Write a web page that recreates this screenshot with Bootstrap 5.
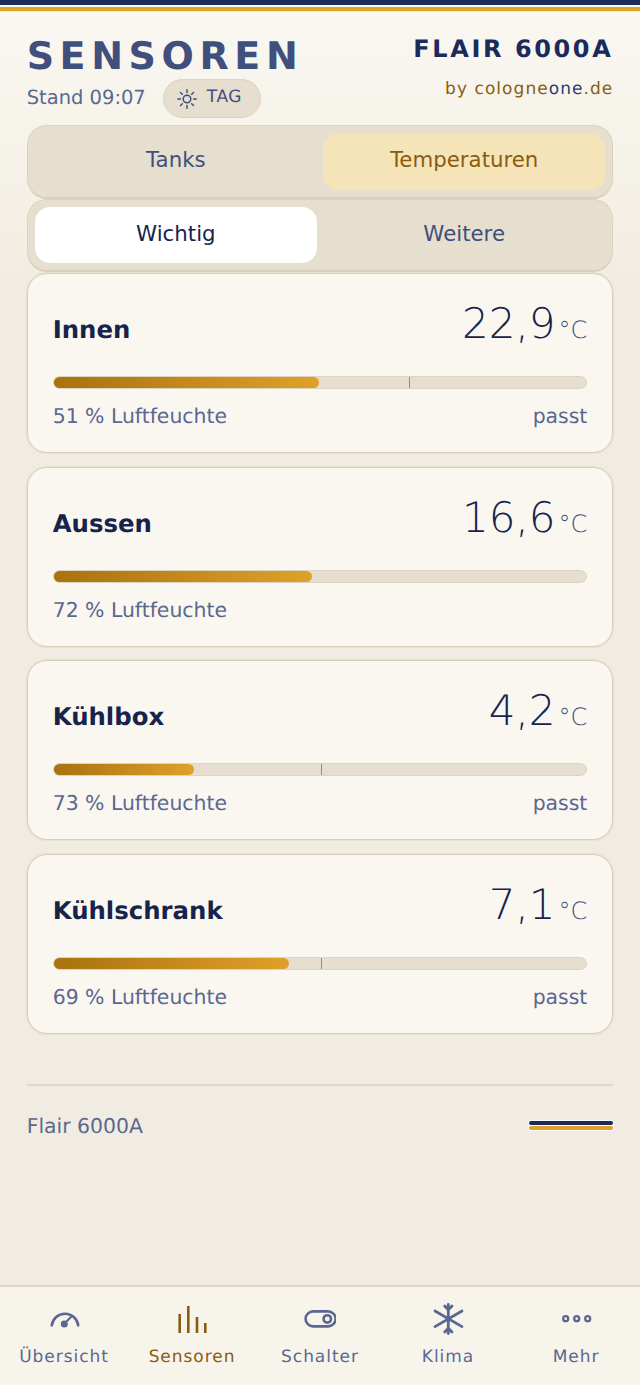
<!DOCTYPE html>
<html lang="de">
<head>
  <meta charset="UTF-8">
  <meta name="viewport" content="width=device-width, initial-scale=1.0">
  <title>Sensoren</title>
  <link href="https://cdn.jsdelivr.net/npm/bootstrap@5.3.0/dist/css/bootstrap.min.css" rel="stylesheet">
  <style>
    body {
      background: #f1ece1;
      font-family: "DejaVu Sans", sans-serif;
      color: #16244c;
      text-rendering: geometricPrecision;
    }
    .app-shell {
      height: 1385px;
      background: linear-gradient(180deg, #faf8f3 0, #f6f3ea 130px, #f1ece1 300px);
    }
    .top-stripe {
      height: 11px;
      border-top: 5px solid #1a2a5a;
      border-bottom: 4px solid #e0a02a;
      background: #fbf9f4;
      box-shadow: 0 1px 0 #f3e9d2;
    }
    .page-head { padding: 25px 26.67px 0; }
    .page-title {
      font-size: 38px;
      font-weight: 700;
      letter-spacing: 5.6px;
      line-height: 40px;
      color: #404f7c;
      margin: 0;
    }
    .stand-text { font-size: 19.5px; color: #5a6890; padding-bottom: 2px; }
    .mode-pill {
      display: inline-flex;
      align-items: center;
      gap: 10px;
      height: 39px;
      padding: 0 18px 0 13px;
      margin-left: 1px;
      border-radius: 20px;
      background: #e6dfd0;
      border: 1px solid #dbd2bd;
      font-size: 17px;
      letter-spacing: .6px;
      color: #404f7c;
    }
    .mode-pill b { font-weight: 400; padding-bottom: 2px; }
    .brand-name {
      font-size: 24px;
      font-weight: 700;
      letter-spacing: 2.6px;
      line-height: 26px;
      color: #1a2a5a;
    }
    .brand-by {
      font-size: 17px;
      letter-spacing: 1.05px;
      color: #8a5c10;
      margin-top: 16px;
      line-height: 22px;
    }
    .brand-by span { color: #2c3c6c; }
    .seg-wrap { padding: 0 26.67px; }
    .seg-track {
      height: 73.5px;
      padding: 7.5px 7px 7px;
      gap: 6px;
      background: #e6dfd0;
      border: 1px solid #dbd2bd;
      border-bottom: 2px solid #d9cfba;
      border-radius: 20px;
    }
    .seg-btn {
      flex: 1 1 0;
      border: 0;
      border-radius: 15px;
      background: transparent;
      font-size: 21.3px;
      color: #404f7c;
      padding: 0 0 3px;
    }
    .seg-btn.on-gold { background: #f6e4b9; color: #8a5c10; }
    .seg-btn.on-white { background: #fff; color: #16244c; }
    .sensor-list { padding: 0 26.67px; gap: 13.67px; margin-top: 1px; }
    .sensor-card {
      height: 180px;
      padding: 22px 25px 0;
      background: #faf7f0;
      border: 1px solid #d8cfb8;
      box-shadow: 0 0 0 1px #e8e1cf;
      border-radius: 20px;
    }
    .sensor-name { font-size: 24.4px; font-weight: 700; color: #16244c; }
    .sensor-temp {
      font-size: 42px;
      font-weight: 200;
      line-height: 56px;
      color: #16244c;
    }
    .sensor-unit {
      font-size: 24px;
      font-weight: 200;
      color: #404f7c;
      margin-left: 3px;
    }
    .sensor-bar {
      position: relative;
      height: 13px;
      margin-top: 18px;
      background: #e6dfd0;
      border: 1px solid #dcd4c2;
      border-radius: 7px;
    }
    .sensor-fill {
      height: 100%;
      border-radius: 6px;
      background: linear-gradient(90deg, #a9720f, #e0a02a);
    }
    .sensor-tick {
      position: absolute;
      top: 0;
      bottom: 0;
      width: 1px;
      background: #8f8d84;
    }
    .sensor-meta { font-size: 20.4px; color: #5a6890; line-height: 24px; margin-top: 15px; }
    .foot-line { margin: 50px 26.67px 0; border-top: 2px solid #dcd7c8; }
    .foot-row { padding: 25px 26.67px 0; }
    .foot-text { font-size: 20.4px; line-height: 30px; color: #5a6890; }
    .foot-logo { width: 86px; padding: 1px; margin-right: -1px; background: #fbf9f4; border-radius: 3px; }
    .foot-logo i { display: block; height: 4px; border-radius: 2px; }
    .foot-logo i:first-child { background: #1a2a5a; margin-bottom: 1px; }
    .foot-logo i:last-child { background: #e0a02a; }
    .bottom-nav {
      height: 100px;
      background: #f7f4ec;
      border-top: 2px solid #e0d6c2;
    }
    .nav-cell {
      flex: 1 1 0;
      padding-top: 16px;
      font-size: 17px;
      letter-spacing: .95px;
      color: #5a6890;
      text-decoration: none;
    }
    .nav-cell.current { color: #8a5c10; }
    .nav-cell svg { display: block; margin-bottom: 10px; }
  </style>
</head>
<body>
  <div class="app-shell d-flex flex-column">
    <div class="top-stripe"></div>

    <header class="page-head d-flex justify-content-between">
      <div>
        <h1 class="page-title">SENSOREN</h1>
        <div class="d-flex align-items-center gap-3" style="margin-top: 3px">
          <span class="stand-text">Stand 09:07</span>
          <span class="mode-pill">
            <svg width="20" height="20" viewBox="0 0 20 20" fill="none" stroke="currentColor" stroke-width="1.5" stroke-linecap="round"><circle cx="10" cy="10" r="3.8"/><path d="M10 .8v2.6M10 16.6v2.6M.8 10h2.6M16.6 10h2.6M3.5 3.5l1.8 1.8M14.7 14.7l1.8 1.8M3.5 16.5l1.8-1.8M14.7 5.3l1.8-1.8"/></svg>
            <b>TAG</b>
          </span>
        </div>
      </div>
      <div class="text-end">
        <div class="brand-name">FLAIR 6000A</div>
        <div class="brand-by">by cologne<span>one</span>.de</div>
      </div>
    </header>

    <div class="seg-wrap" style="margin-top: 7px">
      <div class="seg-track d-flex">
        <button class="seg-btn">Tanks</button>
        <button class="seg-btn on-gold">Temperaturen</button>
      </div>
      <div class="seg-track d-flex">
        <button class="seg-btn on-white">Wichtig</button>
        <button class="seg-btn">Weitere</button>
      </div>
    </div>

    <main class="sensor-list d-flex flex-column">
      <section class="sensor-card d-flex flex-column">
        <div class="d-flex justify-content-between align-items-baseline">
          <span class="sensor-name">Innen</span>
          <span class="sensor-temp">22,9<span class="sensor-unit">°C</span></span>
        </div>
        <div class="sensor-bar"><div class="sensor-fill" style="width: 49.8%"></div><span class="sensor-tick" style="left: 66.8%"></span></div>
        <div class="sensor-meta d-flex justify-content-between"><span>51 % Luftfeuchte</span><span>passt</span></div>
      </section>
      <section class="sensor-card d-flex flex-column">
        <div class="d-flex justify-content-between align-items-baseline">
          <span class="sensor-name">Aussen</span>
          <span class="sensor-temp">16,6<span class="sensor-unit">°C</span></span>
        </div>
        <div class="sensor-bar"><div class="sensor-fill" style="width: 48.5%"></div></div>
        <div class="sensor-meta d-flex justify-content-between"><span>72 % Luftfeuchte</span></div>
      </section>
      <section class="sensor-card d-flex flex-column">
        <div class="d-flex justify-content-between align-items-baseline">
          <span class="sensor-name">Kühlbox</span>
          <span class="sensor-temp">4,2<span class="sensor-unit">°C</span></span>
        </div>
        <div class="sensor-bar"><div class="sensor-fill" style="width: 26.3%"></div><span class="sensor-tick" style="left: 50.1%"></span></div>
        <div class="sensor-meta d-flex justify-content-between"><span>73 % Luftfeuchte</span><span>passt</span></div>
      </section>
      <section class="sensor-card d-flex flex-column">
        <div class="d-flex justify-content-between align-items-baseline">
          <span class="sensor-name">Kühlschrank</span>
          <span class="sensor-temp">7,1<span class="sensor-unit">°C</span></span>
        </div>
        <div class="sensor-bar"><div class="sensor-fill" style="width: 44.2%"></div><span class="sensor-tick" style="left: 50.1%"></span></div>
        <div class="sensor-meta d-flex justify-content-between"><span>69 % Luftfeuchte</span><span>passt</span></div>
      </section>
    </main>

    <div class="foot-line"></div>
    <div class="foot-row d-flex justify-content-between align-items-center">
      <span class="foot-text">Flair 6000A</span>
      <span class="foot-logo"><i></i><i></i></span>
    </div>

    <nav class="bottom-nav d-flex mt-auto">
      <a class="nav-cell d-flex flex-column align-items-center" href="#">
        <svg width="32" height="32" viewBox="0 0 32 32" fill="none" stroke="currentColor" stroke-width="2.6" stroke-linecap="round"><path d="M3.8 22.4a13.3 13.3 0 0 1 26.4 0"/><circle cx="16.3" cy="21" r="3.5" fill="currentColor" stroke="none"/><path d="M17 20l6-6" stroke-width="2.2"/></svg>
        Übersicht
      </a>
      <a class="nav-cell current d-flex flex-column align-items-center" href="#">
        <svg width="32" height="32" viewBox="0 0 32 32" fill="none" stroke="currentColor" stroke-width="2.6"><path d="M3.7 11v19M12.3 3v27M21 14v16M29.3 20v10"/></svg>
        Sensoren
      </a>
      <a class="nav-cell d-flex flex-column align-items-center" href="#">
        <svg width="32" height="32" viewBox="0 0 32 32" fill="none" stroke="currentColor" stroke-width="2.6"><rect x="1.6" y="8.4" width="30" height="15" rx="7.5"/><circle cx="23.3" cy="15.9" r="3.7"/></svg>
        Schalter
      </a>
      <a class="nav-cell d-flex flex-column align-items-center" href="#">
        <svg width="32" height="32" viewBox="0 0 32 32" fill="none" stroke="currentColor" stroke-width="2.8" stroke-linecap="round"><path d="M16.3 1.5v29M3 8l27 15.6M30 8L3 23.6M12.7 3l3.6 3.8L20 3M12.7 29l3.6-3.8L20 29"/></svg>
        Klima
      </a>
      <a class="nav-cell d-flex flex-column align-items-center" href="#">
        <svg width="32" height="32" viewBox="0 0 32 32" fill="none" stroke="currentColor" stroke-width="2.3"><circle cx="5.7" cy="15.7" r="2.5"/><circle cx="16.7" cy="15.7" r="2.5"/><circle cx="27.7" cy="15.7" r="2.5"/></svg>
        Mehr
      </a>
    </nav>
  </div>
  <script src="https://cdn.jsdelivr.net/npm/bootstrap@5.3.0/dist/js/bootstrap.bundle.min.js"></script>
</body>
</html>
